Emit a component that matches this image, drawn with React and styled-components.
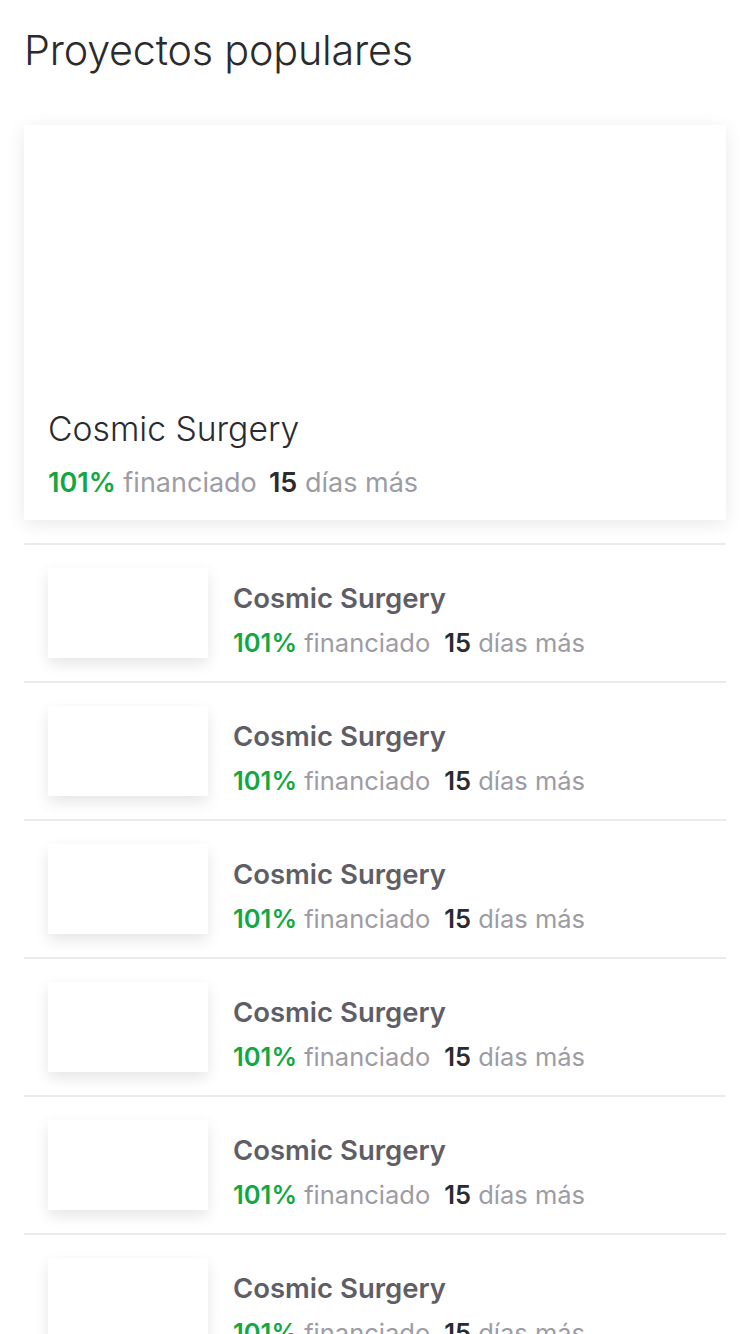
import React from "react";
import styled, { createGlobalStyle } from "styled-components";

const Global = createGlobalStyle`
  html, body { margin: 0; padding: 0; background: #fff; }
  body { font-family: Inter, "Noto Sans", sans-serif; -webkit-font-smoothing: antialiased; }
`;

const Page = styled.div`
  width: 750px;
  height: 1334px;
  overflow: hidden;
  padding: 0 24px;
  box-sizing: border-box;
`;

const Heading = styled.h1`
  margin: 0;
  padding-top: 25px;
  height: 125px;
  box-sizing: border-box;
  font-size: 41.3px;
  font-weight: 300;
  color: #2b2b2e;
  letter-spacing: -0.2px;
`;

const Featured = styled.div`
  height: 395px;
  background: #fff;
  box-shadow: 0 4px 18px rgba(0, 0, 0, 0.09);
  display: flex;
  flex-direction: column;
  justify-content: flex-end;
  padding: 0 24px 21px;
  box-sizing: border-box;
  margin-bottom: 23px;
`;

const FeaturedTitle = styled.div`
  font-size: 33.7px;
  font-weight: 300;
  color: #2b2b2e;
  margin-bottom: 17px;
`;

const Stats = styled.div`
  font-size: ${(p) => p.size}px;
  color: #9d9ca4;
  white-space: nowrap;
`;

const Pct = styled.span`
  color: #12a83f;
  font-weight: 600;
`;

const Days = styled.span`
  color: #2b2b2e;
  font-weight: 600;
  margin-left: ${(p) => p.gap}em;
`;

const List = styled.div`
  display: flex;
  flex-direction: column;
`;

const Row = styled.div`
  display: flex;
  align-items: flex-start;
  gap: 25px;
  padding: 23px 24px;
  height: 138px;
  box-sizing: border-box;
  border-top: 2px solid #ebebeb;
`;

const Thumb = styled.div`
  width: 160px;
  height: 90px;
  flex-shrink: 0;
  background: #fff;
  box-shadow: 0 6px 14px rgba(0, 0, 0, 0.1);
`;

const Info = styled.div`
  display: flex;
  flex-direction: column;
  padding-top: 13px;
`;

const RowTitle = styled.div`
  font-size: 27.5px;
  font-weight: 600;
  color: #5f5e66;
  margin-bottom: 12px;
`;

const StatLine = ({ size, gap }) => (
  <Stats size={size}>
    <Pct>101%</Pct> financiado<Days gap={gap}>15</Days> días más
  </Stats>
);

export default function App() {
  return (
    <>
      <Global />
      <Page>
        <Heading>Proyectos populares</Heading>
        <Featured>
          <FeaturedTitle>Cosmic Surgery</FeaturedTitle>
          <StatLine size={27} gap={0.45} />
        </Featured>
        <List>
          {[0, 1, 2, 3, 4, 5].map((i) => (
            <Row key={i}>
              <Thumb />
              <Info>
                <RowTitle>Cosmic Surgery</RowTitle>
                <StatLine size={25.5} gap={0.55} />
              </Info>
            </Row>
          ))}
        </List>
      </Page>
    </>
  );
}
